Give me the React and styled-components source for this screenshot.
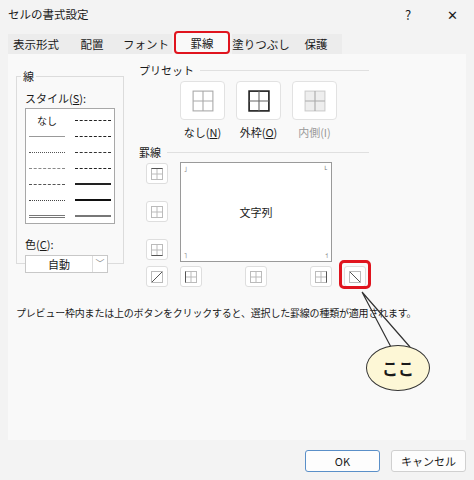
import React from "react";
import styled, { createGlobalStyle } from "styled-components";

const G = createGlobalStyle`
  html,body{margin:0;padding:0;background:#f3f3f3;}
  body{font-family:"Noto Sans CJK JP","Noto Sans",sans-serif;font-size:11px;color:#1a1a1a;}
`;
const Win = styled.div`width:474px;height:480px;position:relative;background:#f3f3f3;overflow:hidden;`;
const Title = styled.div`height:28px;display:flex;align-items:center;padding-left:8px;font-size:11.5px;
  span{flex:1;} b{font-weight:400;width:44px;text-align:center;font-size:13px;}`;
const Tabs = styled.div`display:flex;height:26px;padding-left:8px;align-items:flex-end;`;
const Tab = styled.div`height:20px;width:${p=>p.w}px;display:flex;align-items:center;justify-content:center;font-size:11.5px;
  background:${p=>p.sel?"#f9f9f9":"#ececec"};
  ${p=>p.sel?"border:2.5px solid #e0141e;border-radius:4px;height:19px;margin:0 2px;":""}`;
const Panel = styled.div`margin:0 8px;height:386px;background:#f9f9f9;padding:8px 8px 0;box-sizing:border-box;position:relative;`;
const Top = styled.div`display:flex;gap:12px;`;
const Field = styled.fieldset`width:108px;height:196px;box-sizing:border-box;margin:6px 0 0;border:1px solid #dcdcdc;padding:4px 8px;
  legend{padding:0 2px;margin-left:-4px;font-size:11px;}`;
const Lbl = styled.div`margin:${p=>p.m||"0"};font-size:11px;`;
const StyleBox = styled.div`width:90px;height:116px;background:#fff;border:1px solid #a8a8a8;box-sizing:border-box;display:grid;grid-template-columns:1fr 1fr;grid-auto-rows:16px;padding:3px 3px;column-gap:10px;`;
const Ln = styled.div`display:flex;align-items:center;justify-content:center;font-size:10px;
  i{display:block;width:100%;border-top:${p=>p.b};}`;
const Select = styled.div`margin-top:3px;width:83px;height:18px;border:1px solid #c8c8c8;background:#fff;display:flex;box-sizing:border-box;
  span{flex:1;text-align:center;line-height:16px;} em{width:14px;border-left:1px solid #ddd;font-style:normal;color:#888;font-size:9px;text-align:center;line-height:16px;}`;
const Right = styled.div`flex:1;padding-top:0;`;
const Head = styled.div`display:flex;align-items:center;gap:6px;width:230px;margin-left:3px;margin-top:${p=>p.mt||0}px;
  &::after{content:"";flex:1;border-top:1px solid #e0e0e0;}`;
const Presets = styled.div`display:flex;gap:11px;margin:3px 0 0 44px;`;
const PCol = styled.div`display:flex;flex-direction:column;align-items:center;gap:4px;color:${p=>p.dis?"#999":"#1a1a1a"};
  span{white-space:nowrap;}`;
const Big = styled.div`width:43px;height:37px;background:#fff;border:1px solid #e2e2e2;border-radius:4px;display:flex;align-items:center;justify-content:center;`;
const Grid = styled.div`display:grid;grid-template-columns:22px 12px 152px;grid-template-rows:auto auto;margin:2px 0 0 10px;`;
const Side = styled.div`display:flex;flex-direction:column;gap:17px;padding-top:1px;`;
const Sm = styled.div`width:22px;height:21px;background:#fff;border:1px solid #dedede;border-radius:3px;box-sizing:border-box;display:flex;align-items:center;justify-content:center;position:relative;`;
const Preview = styled.div`height:100px;border:1px solid #9a9a9a;background:#fff;box-sizing:border-box;display:flex;align-items:center;justify-content:center;position:relative;font-size:11px;`;
const Bottom = styled.div`grid-column:3;display:flex;justify-content:space-between;margin-top:4px;width:186px;`;
const Hi = styled.div`position:absolute;inset:-7px -6px -3px -6px;border:3px solid #e0141e;border-radius:5px;`;
const Desc = styled.div`margin-top:18px;font-size:10px;letter-spacing:-0.2px;`;
const Foot = styled.div`display:flex;justify-content:flex-end;gap:11px;padding:10px 8px 0;`;
const Btn = styled.div`width:${p=>p.w}px;height:22px;box-sizing:border-box;border:1px solid ${p=>p.def?"#5a8fc8":"#d0d0d0"};border-radius:3px;background:#fdfdfd;display:flex;align-items:center;justify-content:center;font-size:11px;`;
const Bubble = styled.div`position:absolute;left:366px;top:345px;width:64px;height:46px;border-radius:50%;background:#fdf7d6;border:1.5px solid #333;box-sizing:border-box;display:flex;align-items:center;justify-content:center;font-weight:700;font-size:16px;`;
const Mk = styled.span`position:absolute;font-size:7px;color:#777;${p=>p.pos}`;

const GridIcon = ({s=20,c="#555",out="#555",w=1,fill}) => (
  <svg width={s} height={s} viewBox="0 0 20 20">
    {fill && <rect x="1" y="1" width="18" height="18" fill={fill}/>}
    <rect x="1" y="1" width="18" height="18" fill="none" stroke={out} strokeWidth={w}/>
    <path d="M10 1v18M1 10h18" stroke={c} strokeWidth="1"/>
  </svg>
);
const Si = ({children}) => <svg width="14" height="14" viewBox="0 0 14 14" fill="none" stroke="#555" strokeWidth="1">{children}</svg>;
const box = <><rect x="1.5" y="1.5" width="11" height="11" stroke="#bbb"/><path d="M7 1.5v11M1.5 7h11" stroke="#bbb"/></>;

const lines = [
  ["なし",null],[null,"1px dashed #222"],
  [null,"1px solid #999"],[null,"1.5px dashed #222"],
  [null,"1px dotted #555"],[null,"1.5px dashed #333"],
  [null,"1px dashed #888"],[null,"1.5px dashed #222"],
  [null,"1px dashed #555"],[null,"2px solid #222"],
  [null,"1px dotted #444"],[null,"2.5px solid #111"],
  [null,"3px double #777"],[null,"2.5px solid #777"],
];

export default function App(){
  return <Win><G/>
    <Title><span>セルの書式設定</span><b>?</b><b>✕</b></Title>
    <Tabs>
      <Tab w={56}>表示形式</Tab><Tab w={56}>配置</Tab><Tab w={52}>フォント</Tab>
      <Tab w={52} sel>罫線</Tab><Tab w={58}>塗りつぶし</Tab><Tab w={52}>保護</Tab>
    </Tabs>
    <Panel>
      <Top>
        <Field><legend>線</legend>
          <Lbl m="2px 0 2px">スタイル(<u>S</u>):</Lbl>
          <StyleBox>{lines.map((l,i)=><Ln key={i} b={l[1]}>{l[0]||<i/>}</Ln>)}</StyleBox>
          <Lbl m="12px 0 0">色(<u>C</u>):</Lbl>
          <Select><span>自動</span><em>﹀</em></Select>
        </Field>
        <Right>
          <Head>プリセット</Head>
          <Presets>
            <PCol><Big><GridIcon s={22} c="#aaa" out="#aaa"/></Big><span>なし(<u>N</u>)</span></PCol>
            <PCol><Big><GridIcon s={22} c="#666" out="#222" w={1.5}/></Big><span>外枠(<u>O</u>)</span></PCol>
            <PCol dis><Big><GridIcon s={22} c="#aaa" out="#ccc" fill="#eee"/></Big><span>内側(I)</span></PCol>
          </Presets>
          <Head mt={4}>罫線</Head>
          <Grid>
            <Side>
              <Sm><Si>{box}<path d="M1.5 1.5h11"/></Si></Sm>
              <Sm><Si>{box}</Si></Sm>
              <Sm><Si>{box}<path d="M1.5 12.5h11"/></Si></Sm>
            </Side>
            <div/>
            <Preview>文字列
              <Mk pos="left:3px;top:1px;">˩</Mk><Mk pos="right:3px;top:1px;">˪</Mk>
              <Mk pos="left:3px;bottom:1px;">˥</Mk><Mk pos="right:3px;bottom:1px;">˦</Mk>
            </Preview>
            <Sm style={{marginTop:4}}><Si><rect x="1.5" y="1.5" width="11" height="11" stroke="#bbb"/><path d="M2 12L12 2"/></Si></Sm>
            <div/>
            <Bottom>
              <Sm><Si>{box}<path d="M1.5 1.5v11"/></Si></Sm>
              <Sm><Si>{box}</Si></Sm>
              <div style={{display:"flex",gap:12}}>
                <Sm><Si>{box}<path d="M12.5 1.5v11"/></Si></Sm>
                <Sm><Hi/><Si><rect x="1.5" y="1.5" width="11" height="11" stroke="#bbb"/><path d="M2 2l10 10"/></Si></Sm>
              </div>
            </Bottom>
          </Grid>
        </Right>
      </Top>
      <Desc>プレビュー枠内または上のボタンをクリックすると、選択した罫線の種類が適用されます。</Desc>
    </Panel>
    <svg width="474" height="480" style={{position:"absolute",left:0,top:0,pointerEvents:"none"}}>
      <path d="M362 292L392 349M362 292L410 347" stroke="#333" strokeWidth="1.2" fill="none"/>
    </svg>
    <Bubble>ここ</Bubble>
    <Foot><Btn w={75} def>OK</Btn><Btn w={75}>キャンセル</Btn></Foot>
  </Win>;
}
